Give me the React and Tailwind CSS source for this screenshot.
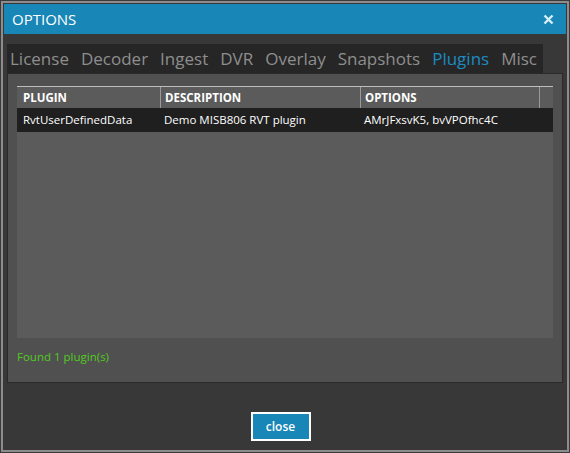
const TABS = ["License", "Decoder", "Ingest", "DVR", "Overlay", "Snapshots", "Plugins", "Misc"];

const COLUMNS = [
  { label: "PLUGIN", width: "w-[143px]", pad: "pl-[6px]" },
  { label: "DESCRIPTION", width: "w-[200px]", pad: "pl-[4px]" },
  { label: "OPTIONS", width: "w-[179px]", pad: "pl-[4px]" },
  { label: "", width: "w-[11px]", pad: "" },
];

const ROWS = [["RvtUserDefinedData", "Demo MISB806 RVT plugin", "AMrJFxsvK5, bvVPOfhc4C"]];

export default function App() {
  return (
    <div
      className="w-[570px] h-[453px] bg-[#3a3a3a] p-px"
      style={{ fontFamily: '"Open Sans", "Noto Sans", sans-serif' }}
    >
      <div className="h-full border-2 border-[#8c8c8c] bg-[#383838] flex flex-col">
        <div className="mx-px mt-px h-[30px] bg-[#1886b6] flex items-center justify-between pl-[8px] pr-[12px]">
          <span className="text-white text-[15px] leading-none">OPTIONS</span>
          <svg width="11" height="11" viewBox="0 0 11 11">
            <path d="M1.5 1.5 L9.5 9.5 M9.5 1.5 L1.5 9.5" stroke="#d8eef8" strokeWidth="2.4" />
          </svg>
        </div>

        <div className="flex-1 flex flex-col pt-[10px] pl-[4px] pr-[4px]">
          <div className="w-[536px] h-[29px] bg-[#262626] flex items-center gap-[12px] pl-[3px] text-[17px] leading-none text-[#8e8e8e]">
            {TABS.map((t) => (
              <span key={t} className={t === "Plugins" ? "text-[#1b8bc2]" : ""}>
                {t}
              </span>
            ))}
          </div>

          <div className="h-[310px] bg-[#505050] border border-[#2a2a2a] flex flex-col pl-[9px] pr-[9px] pt-[12px]">
            <div className="h-[252px] bg-[#5b5b5b] flex flex-col">
              <div className="flex h-[22px] border-t border-[#bdbdbd] text-white text-[11.5px] font-bold">
                {COLUMNS.map((c, i) => (
                  <div
                    key={i}
                    className={`${c.width} ${c.pad} shrink-0 flex items-center ${i > 0 ? "border-l border-[#9a9a9a]" : ""}`}
                  >
                    {c.label}
                  </div>
                ))}
              </div>
              {ROWS.map((r, i) => (
                <div key={i} className="flex h-[24px] bg-[#1f1f1f] text-white text-[11.5px]">
                  {r.map((cell, j) => (
                    <div key={j} className={`${COLUMNS[j].width} ${COLUMNS[j].pad} shrink-0 flex items-center`}>
                      {cell}
                    </div>
                  ))}
                </div>
              ))}
            </div>
            <div className="mt-[10px] text-[11.5px] text-[#52cc22]">Found 1 plugin(s)</div>
          </div>

          <div className="flex-1 flex items-start justify-center pt-[29px] pr-[9px]">
            <button className="w-[60px] h-[29px] bg-[#1886b6] border-2 border-white text-white text-[12px] font-semibold leading-none">
              close
            </button>
          </div>
        </div>
      </div>
    </div>
  );
}
